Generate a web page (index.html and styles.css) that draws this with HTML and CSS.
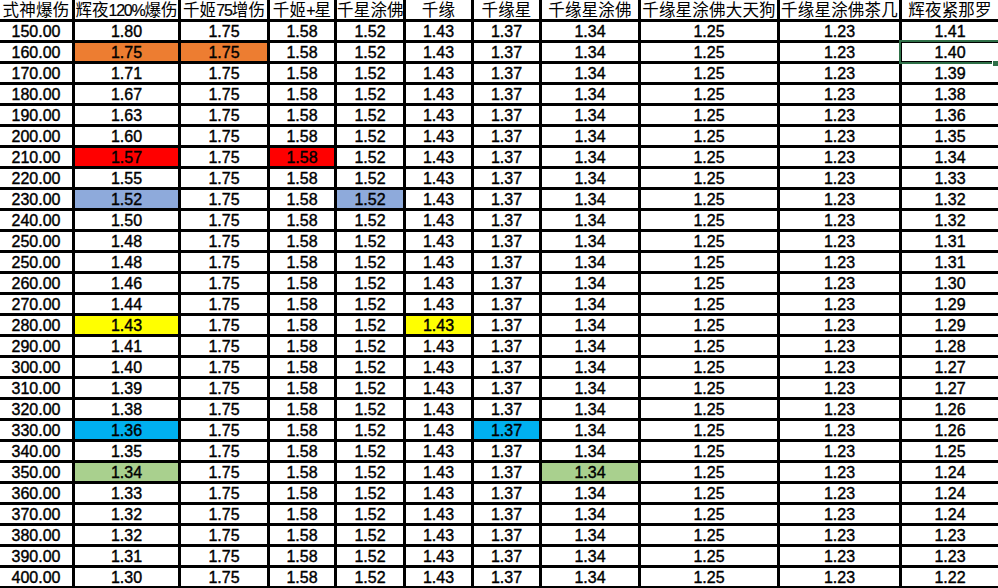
FILE: index.html
```html
<!DOCTYPE html>
<html lang="zh">
<head>
<meta charset="utf-8">
<title>式神爆伤</title>
<link rel="stylesheet" href="styles.css">
</head>
<body>
<div class="sheet">
  <div class="grid">
    <div class="h">式神爆伤</div><div class="h tight">辉夜<span class="hn">120%</span>爆伤</div><div class="h">千姬<span class="hn">75</span>增伤</div><div class="h">千姬<span class="hn">+</span>星</div><div class="h">千星涂佛</div><div class="h">千缘</div><div class="h">千缘星</div><div class="h">千缘星涂佛</div><div class="h">千缘星涂佛大天狗</div><div class="h">千缘星涂佛茶几</div><div class="h">辉夜紧那罗</div>

    <div>150.00</div><div>1.80</div><div>1.75</div><div>1.58</div><div>1.52</div><div>1.43</div><div>1.37</div><div>1.34</div><div>1.25</div><div>1.23</div><div>1.41</div>
    <div>160.00</div><div class="orange">1.75</div><div class="orange">1.75</div><div>1.58</div><div>1.52</div><div>1.43</div><div>1.37</div><div>1.34</div><div>1.25</div><div>1.23</div><div>1.40</div>
    <div>170.00</div><div>1.71</div><div>1.75</div><div>1.58</div><div>1.52</div><div>1.43</div><div>1.37</div><div>1.34</div><div>1.25</div><div>1.23</div><div>1.39</div>
    <div>180.00</div><div>1.67</div><div>1.75</div><div>1.58</div><div>1.52</div><div>1.43</div><div>1.37</div><div>1.34</div><div>1.25</div><div>1.23</div><div>1.38</div>
    <div>190.00</div><div>1.63</div><div>1.75</div><div>1.58</div><div>1.52</div><div>1.43</div><div>1.37</div><div>1.34</div><div>1.25</div><div>1.23</div><div>1.36</div>
    <div>200.00</div><div>1.60</div><div>1.75</div><div>1.58</div><div>1.52</div><div>1.43</div><div>1.37</div><div>1.34</div><div>1.25</div><div>1.23</div><div>1.35</div>
    <div>210.00</div><div class="red">1.57</div><div>1.75</div><div class="red">1.58</div><div>1.52</div><div>1.43</div><div>1.37</div><div>1.34</div><div>1.25</div><div>1.23</div><div>1.34</div>
    <div>220.00</div><div>1.55</div><div>1.75</div><div>1.58</div><div>1.52</div><div>1.43</div><div>1.37</div><div>1.34</div><div>1.25</div><div>1.23</div><div>1.33</div>
    <div>230.00</div><div class="blue">1.52</div><div>1.75</div><div>1.58</div><div class="blue">1.52</div><div>1.43</div><div>1.37</div><div>1.34</div><div>1.25</div><div>1.23</div><div>1.32</div>
    <div>240.00</div><div>1.50</div><div>1.75</div><div>1.58</div><div>1.52</div><div>1.43</div><div>1.37</div><div>1.34</div><div>1.25</div><div>1.23</div><div>1.32</div>
    <div>250.00</div><div>1.48</div><div>1.75</div><div>1.58</div><div>1.52</div><div>1.43</div><div>1.37</div><div>1.34</div><div>1.25</div><div>1.23</div><div>1.31</div>
    <div>250.00</div><div>1.48</div><div>1.75</div><div>1.58</div><div>1.52</div><div>1.43</div><div>1.37</div><div>1.34</div><div>1.25</div><div>1.23</div><div>1.31</div>
    <div>260.00</div><div>1.46</div><div>1.75</div><div>1.58</div><div>1.52</div><div>1.43</div><div>1.37</div><div>1.34</div><div>1.25</div><div>1.23</div><div>1.30</div>
    <div>270.00</div><div>1.44</div><div>1.75</div><div>1.58</div><div>1.52</div><div>1.43</div><div>1.37</div><div>1.34</div><div>1.25</div><div>1.23</div><div>1.29</div>
    <div>280.00</div><div class="yellow">1.43</div><div>1.75</div><div>1.58</div><div>1.52</div><div class="yellow">1.43</div><div>1.37</div><div>1.34</div><div>1.25</div><div>1.23</div><div>1.29</div>
    <div>290.00</div><div>1.41</div><div>1.75</div><div>1.58</div><div>1.52</div><div>1.43</div><div>1.37</div><div>1.34</div><div>1.25</div><div>1.23</div><div>1.28</div>
    <div>300.00</div><div>1.40</div><div>1.75</div><div>1.58</div><div>1.52</div><div>1.43</div><div>1.37</div><div>1.34</div><div>1.25</div><div>1.23</div><div>1.27</div>
    <div>310.00</div><div>1.39</div><div>1.75</div><div>1.58</div><div>1.52</div><div>1.43</div><div>1.37</div><div>1.34</div><div>1.25</div><div>1.23</div><div>1.27</div>
    <div>320.00</div><div>1.38</div><div>1.75</div><div>1.58</div><div>1.52</div><div>1.43</div><div>1.37</div><div>1.34</div><div>1.25</div><div>1.23</div><div>1.26</div>
    <div>330.00</div><div class="cyan">1.36</div><div>1.75</div><div>1.58</div><div>1.52</div><div>1.43</div><div class="cyan">1.37</div><div>1.34</div><div>1.25</div><div>1.23</div><div>1.26</div>
    <div>340.00</div><div>1.35</div><div>1.75</div><div>1.58</div><div>1.52</div><div>1.43</div><div>1.37</div><div>1.34</div><div>1.25</div><div>1.23</div><div>1.25</div>
    <div>350.00</div><div class="green">1.34</div><div>1.75</div><div>1.58</div><div>1.52</div><div>1.43</div><div>1.37</div><div class="green">1.34</div><div>1.25</div><div>1.23</div><div>1.24</div>
    <div>360.00</div><div>1.33</div><div>1.75</div><div>1.58</div><div>1.52</div><div>1.43</div><div>1.37</div><div>1.34</div><div>1.25</div><div>1.23</div><div>1.24</div>
    <div>370.00</div><div>1.32</div><div>1.75</div><div>1.58</div><div>1.52</div><div>1.43</div><div>1.37</div><div>1.34</div><div>1.25</div><div>1.23</div><div>1.24</div>
    <div>380.00</div><div>1.32</div><div>1.75</div><div>1.58</div><div>1.52</div><div>1.43</div><div>1.37</div><div>1.34</div><div>1.25</div><div>1.23</div><div>1.23</div>
    <div>390.00</div><div>1.31</div><div>1.75</div><div>1.58</div><div>1.52</div><div>1.43</div><div>1.37</div><div>1.34</div><div>1.25</div><div>1.23</div><div>1.23</div>
    <div>400.00</div><div>1.30</div><div>1.75</div><div>1.58</div><div>1.52</div><div>1.43</div><div>1.37</div><div>1.34</div><div>1.25</div><div>1.23</div><div>1.22</div>
  </div>
  <div class="selection"><span class="handle"></span></div>
</div>
</body>
</html>
```
FILE: styles.css
```css
html, body {
  margin: 0;
  padding: 0;
  background: #fff;
}
body {
  width: 998px;
  height: 588px;
  overflow: hidden;
}
.sheet {
  position: relative;
  width: 998px;
  height: 588px;
}
.grid {
  display: grid;
  grid-template-columns: 72px 103px 86px 64px 66px 65px 65px 96px 136px 119px 96px;
  grid-template-rows: 19px repeat(27, 18px);
  gap: 3px;
  padding-bottom: 2px;
  background: #000;
  width: 998px;
  font-family: "Liberation Sans", Arial, sans-serif;
  font-size: 16px;
  color: #000;
  -webkit-text-stroke: 0.4px #000;
}
.grid > div {
  background: #fff;
  text-align: center;
  line-height: 19px;
  white-space: nowrap;
}
.grid > .h {
  font-family: "Noto Sans CJK SC", "Liberation Sans", sans-serif;
  font-size: 16.5px;
  line-height: 19px;
  letter-spacing: 0.2px;
  -webkit-text-stroke: 0;
}
.grid > .h.tight {
  letter-spacing: 0;
}
.hn {
  font-family: "Liberation Sans", Arial, sans-serif;
  font-size: 16px;
  letter-spacing: -1.2px;
  -webkit-text-stroke: 0.2px #000;
}
.grid > .orange { background: #ed7d31; }
.grid > .red { background: #ff0000; }
.grid > .blue { background: #8eaadb; }
.grid > .yellow { background: #ffff00; }
.grid > .cyan { background: #00b0f0; }
.grid > .green { background: #a9d08e; }
.selection {
  position: absolute;
  left: 899px;
  top: 40px;
  width: 104px;
  height: 20px;
  border: 2px solid #2f7048;
}
.handle {
  position: absolute;
  left: 91px;
  top: 18px;
  width: 5px;
  height: 5px;
  background: #2f7048;
  border: 1px solid #fff;
}
```
